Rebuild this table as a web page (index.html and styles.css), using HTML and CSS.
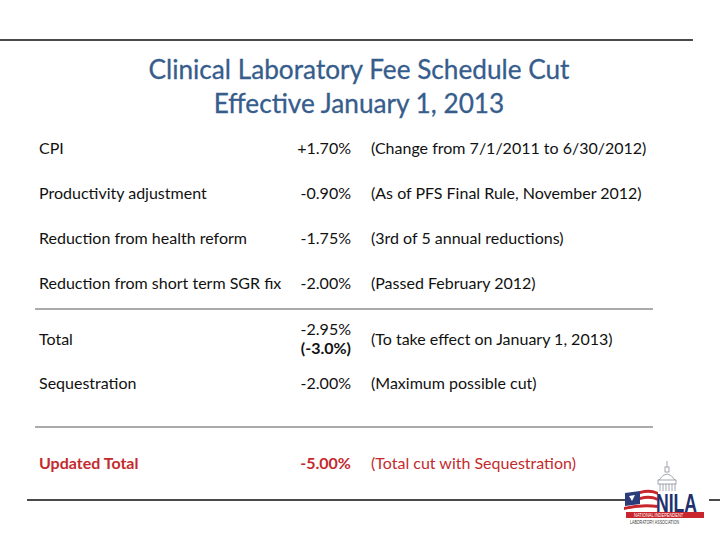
FILE: index.html
```html
<!DOCTYPE html>
<html>
<head>
<meta charset="utf-8">
<link rel="stylesheet" href="styles.css">
</head>
<body>
<div class="slide">
  <div class="topline"></div>
  <h1 class="title">Clinical Laboratory Fee Schedule Cut<br>Effective January 1, 2013</h1>
  <div class="table">
    <div class="row"><div class="label">CPI</div><div class="val">+1.70%</div><div class="note">(Change from 7/1/2011 to 6/30/2012)</div></div>
    <div class="row"><div class="label">Productivity adjustment</div><div class="val">-0.90%</div><div class="note">(As of PFS Final Rule, November 2012)</div></div>
    <div class="row"><div class="label">Reduction from health reform</div><div class="val">-1.75%</div><div class="note">(3rd of 5 annual reductions)</div></div>
    <div class="row"><div class="label">Reduction from short term SGR fix</div><div class="val">-2.00%</div><div class="note">(Passed February 2012)</div></div>
    <div class="rule rule1"></div>
    <div class="row total"><div class="label">Total</div><div class="val">-2.95%<br><b>(-3.0%)</b></div><div class="note">(To take effect on January 1, 2013)</div></div>
    <div class="row seq"><div class="label">Sequestration</div><div class="val">-2.00%</div><div class="note">(Maximum possible cut)</div></div>
    <div class="rule rule2"></div>
    <div class="row updated"><div class="label">Updated Total</div><div class="val">-5.00%</div><div class="note">(Total cut with Sequestration)</div></div>
  </div>
  <div class="footer">
    <div class="footline"></div>
    <div class="logo">
      <svg width="86" height="66" viewBox="0 0 86 66">
        <g fill="none" stroke="#8a8f99" stroke-width="0.8">
          <line x1="44" y1="1" x2="44" y2="7"/>
          <rect x="42" y="7" width="4" height="5"/>
          <path d="M36 20 Q44 8 52 20"/>
          <rect x="35" y="20" width="18" height="4"/>
          <line x1="37" y1="24" x2="37" y2="31"/><line x1="40" y1="24" x2="40" y2="31"/><line x1="43" y1="24" x2="43" y2="31"/><line x1="46" y1="24" x2="46" y2="31"/><line x1="49" y1="24" x2="49" y2="31"/><line x1="52" y1="24" x2="52" y2="31"/>
        </g>
        <path d="M2 33 L17 31 L17 44 L2 46 Z" fill="#2b3c7a"/>
        <path d="M17 31 Q27 28 35 32 L35 35 Q27 31 17 34 Z" fill="#c8262c"/>
        <path d="M17 37 Q27 34 35 38 L35 41 Q27 37 17 40 Z" fill="#c8262c"/>
        <path d="M1 47 Q17 43 35 45 L35 48 Q17 46 1 50 Z" fill="#c8262c"/>
        <path d="M6 36 L12 35 L9 41 Z" fill="#fff"/>
        <text transform="translate(33 52) scale(0.88 1.25)" font-family="Liberation Sans, sans-serif" font-size="20" font-weight="bold" fill="#22306e">NILA</text>
        <rect x="3" y="52" width="78" height="6" fill="#c8262c"/>
        <text transform="translate(11 56.8) scale(0.8 1)" font-family="Liberation Sans, sans-serif" font-size="5" fill="#fff">NATIONAL INDEPENDENT</text>
        <text transform="translate(7 64) scale(0.8 1)" font-family="Liberation Sans, sans-serif" font-size="4.5" fill="#333">LABORATORY ASSOCIATION</text>
      </svg>
    </div>
    <div class="footline short"></div>
  </div>
</div>
</body>
</html>
```
FILE: styles.css
```css
html, body {
  margin: 0;
  padding: 0;
  background: #fff;
}
* {
  box-sizing: border-box;
}
.slide {
  width: 720px;
  height: 540px;
  position: relative;
  overflow: hidden;
  font-family: Lato, "Open Sans", sans-serif;
  color: #111;
}
.topline {
  margin-top: 39px;
  width: 693px;
  height: 2px;
  background: #4a4a4a;
}
.title {
  margin: 11px 0 0 0;
  text-align: center;
  font-weight: normal;
  font-size: 26.2px;
  line-height: 34px;
  color: #365d8c;
  padding-right: 2px;
  -webkit-text-stroke: 0.3px #365d8c;
}
.table {
  margin: 5px 0 0 35px;
  width: 618px;
}
.row {
  display: flex;
  align-items: center;
  height: 45px;
  font-size: 16px;
  white-space: nowrap;
}
.label {
  flex: 1 1 0;
  min-width: 0;
  padding-left: 4px;
}
.val {
  flex: none;
  width: 79px;
  text-align: right;
}
.note {
  flex: none;
  width: 302px;
  padding-left: 20px;
}
.rule {
  height: 2px;
  background: #ababab;
}
.rule1 {
  margin-top: 3px;
}
.row.total {
  height: 56px;
}
.row.total .val {
  line-height: 19px;
}
.row.seq {
  height: 32px;
}
.rule2 {
  margin-top: 28px;
}
.row.updated {
  margin-top: 12px;
  height: 44px;
  color: #c42a2d;
}
.row.updated .label, .row.updated .val {
  font-weight: bold;
}
.footer {
  position: absolute;
  left: 27px;
  top: 460px;
  right: 0;
  display: flex;
  align-items: flex-start;
}
.footline {
  margin-top: 39px;
  width: 598px;
  height: 2px;
  background: #4a4a4a;
}
.footline.short {
  width: auto;
  flex: 1;
}
.logo {
  width: 86px;
  height: 66px;
  margin-left: -2px;
}
```
